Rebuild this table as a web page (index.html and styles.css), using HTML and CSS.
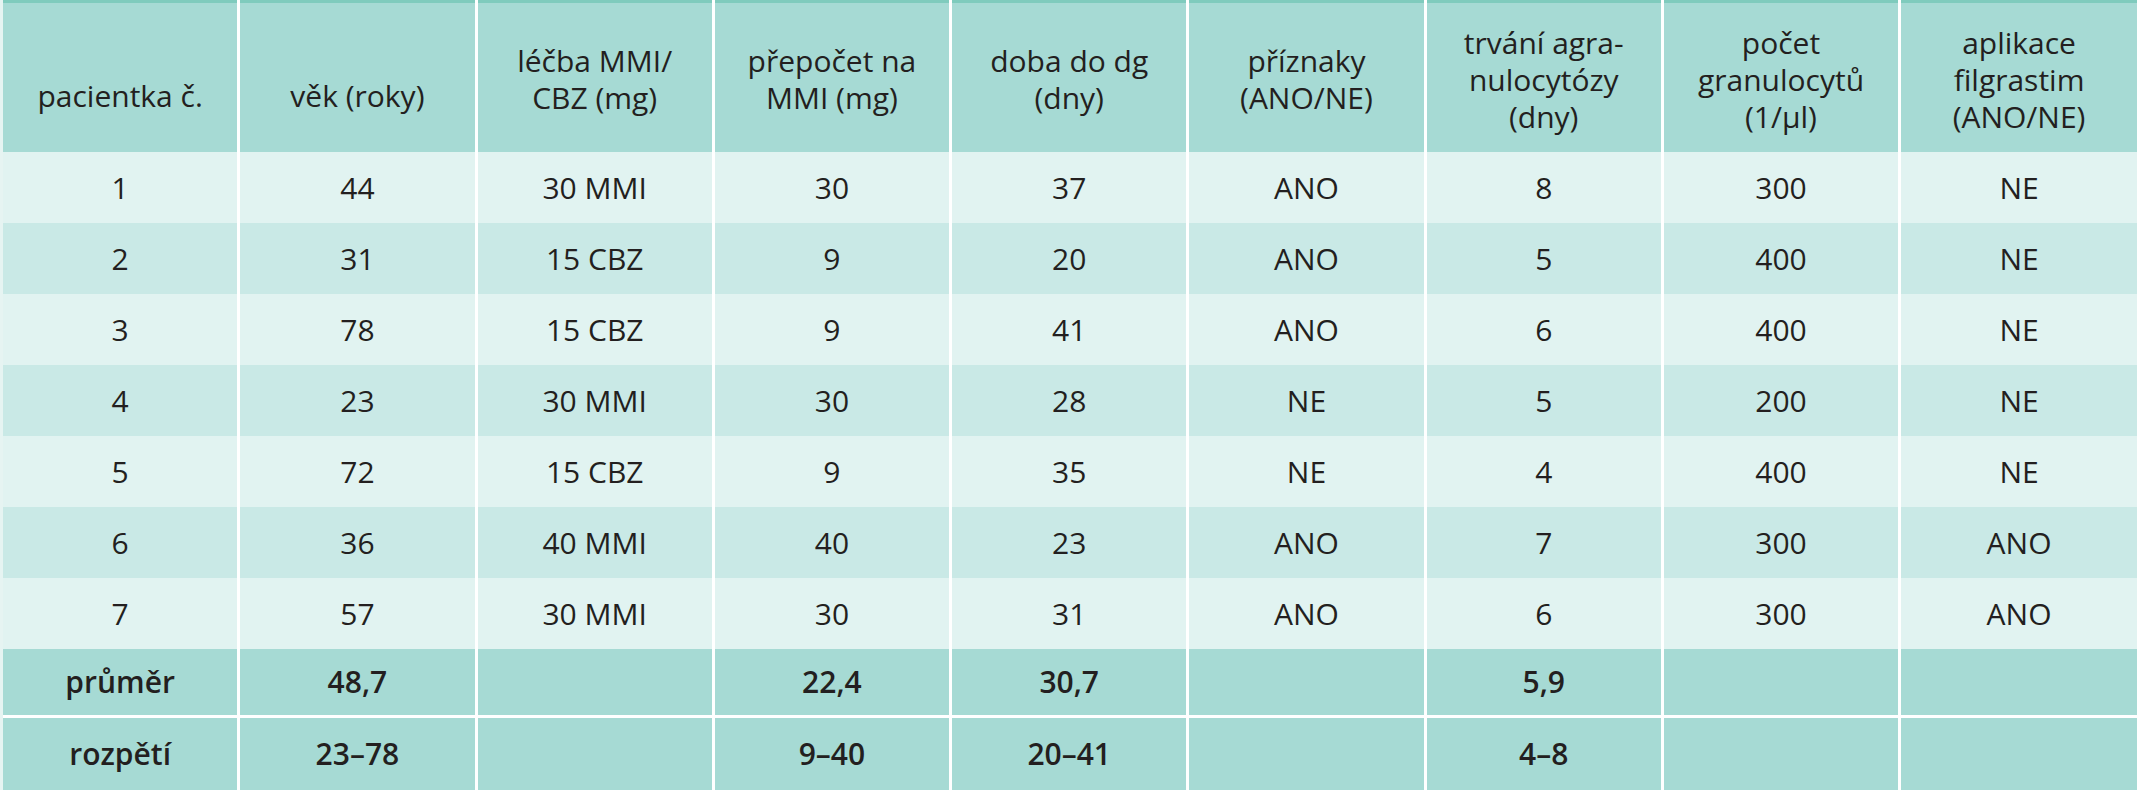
FILE: index.html
```html
<!DOCTYPE html>
<html lang="cs">
<head>
<meta charset="utf-8">
<title>Agranulocytóza – pacientky</title>
<link rel="stylesheet" href="styles.css">
</head>
<body>
<table class="data">
  <thead>
    <tr class="head">
      <th class="one">pacientka č.</th>
      <th class="one">věk (roky)</th>
      <th class="two">léčba MMI/<br>CBZ (mg)</th>
      <th class="two">přepočet na<br>MMI (mg)</th>
      <th class="two">doba do dg<br>(dny)</th>
      <th class="two">příznaky<br>(ANO/NE)</th>
      <th class="three">trvání agra-<br>nulocytózy<br>(dny)</th>
      <th class="three">počet<br>granulocytů<br>(1/µl)</th>
      <th class="three">aplikace<br>filgrastim<br>(ANO/NE)</th>
    </tr>
  </thead>
  <tbody>
    <tr class="odd"><td>1</td><td>44</td><td>30 MMI</td><td>30</td><td>37</td><td>ANO</td><td>8</td><td>300</td><td>NE</td></tr>
    <tr class="even"><td>2</td><td>31</td><td>15 CBZ</td><td>9</td><td>20</td><td>ANO</td><td>5</td><td>400</td><td>NE</td></tr>
    <tr class="odd"><td>3</td><td>78</td><td>15 CBZ</td><td>9</td><td>41</td><td>ANO</td><td>6</td><td>400</td><td>NE</td></tr>
    <tr class="even"><td>4</td><td>23</td><td>30 MMI</td><td>30</td><td>28</td><td>NE</td><td>5</td><td>200</td><td>NE</td></tr>
    <tr class="odd"><td>5</td><td>72</td><td>15 CBZ</td><td>9</td><td>35</td><td>NE</td><td>4</td><td>400</td><td>NE</td></tr>
    <tr class="even"><td>6</td><td>36</td><td>40 MMI</td><td>40</td><td>23</td><td>ANO</td><td>7</td><td>300</td><td>ANO</td></tr>
    <tr class="odd"><td>7</td><td>57</td><td>30 MMI</td><td>30</td><td>31</td><td>ANO</td><td>6</td><td>300</td><td>ANO</td></tr>
  </tbody>
  <tfoot>
    <tr class="sum mean"><td>průměr</td><td>48,7</td><td></td><td>22,4</td><td>30,7</td><td></td><td>5,9</td><td></td><td></td></tr>
    <tr class="sum range"><td>rozpětí</td><td>23–78</td><td></td><td>9–40</td><td>20–41</td><td></td><td>4–8</td><td></td><td></td></tr>
  </tfoot>
</table>
</body>
</html>
```

FILE: styles.css
```css
html, body {
  margin: 0;
  padding: 0;
  background: #ffffff;
}

.data {
  width: 2137px;
  table-layout: fixed;
  border-collapse: collapse;
  border-top: 3px solid #7fcbbd;
  font-family: "Open Sans", "Noto Sans", sans-serif;
  font-size: 30px;
  color: #231f20;
}

.data th,
.data td {
  padding: 0;
  text-align: center;
  vertical-align: middle;
  border-left: 3px solid #ffffff;
}

.data th:first-child,
.data td:first-child {
  border-left: 3px solid #e6f4f2;
}

.head {
  height: 150px;
  background: #a6dad4;
}

.head th {
  font-weight: 500;
  line-height: 37px;
}

.head th.one {
  padding-top: 36px;
}

.head th.two {
  padding-top: 4px;
}

.head th.three {
  padding-top: 4px;
}

tbody tr {
  height: 71px;
}

tbody td {
  font-weight: 400;
}

.odd {
  background: #e1f3f1;
}

.even {
  background: #c9e9e6;
}

.sum {
  background: #a6dad4;
}

.sum td {
  font-weight: 600;
}

.mean {
  height: 68px;
}

.range {
  height: 73px;
}

.range td {
  border-top: 3px solid #ffffff;
}
```
